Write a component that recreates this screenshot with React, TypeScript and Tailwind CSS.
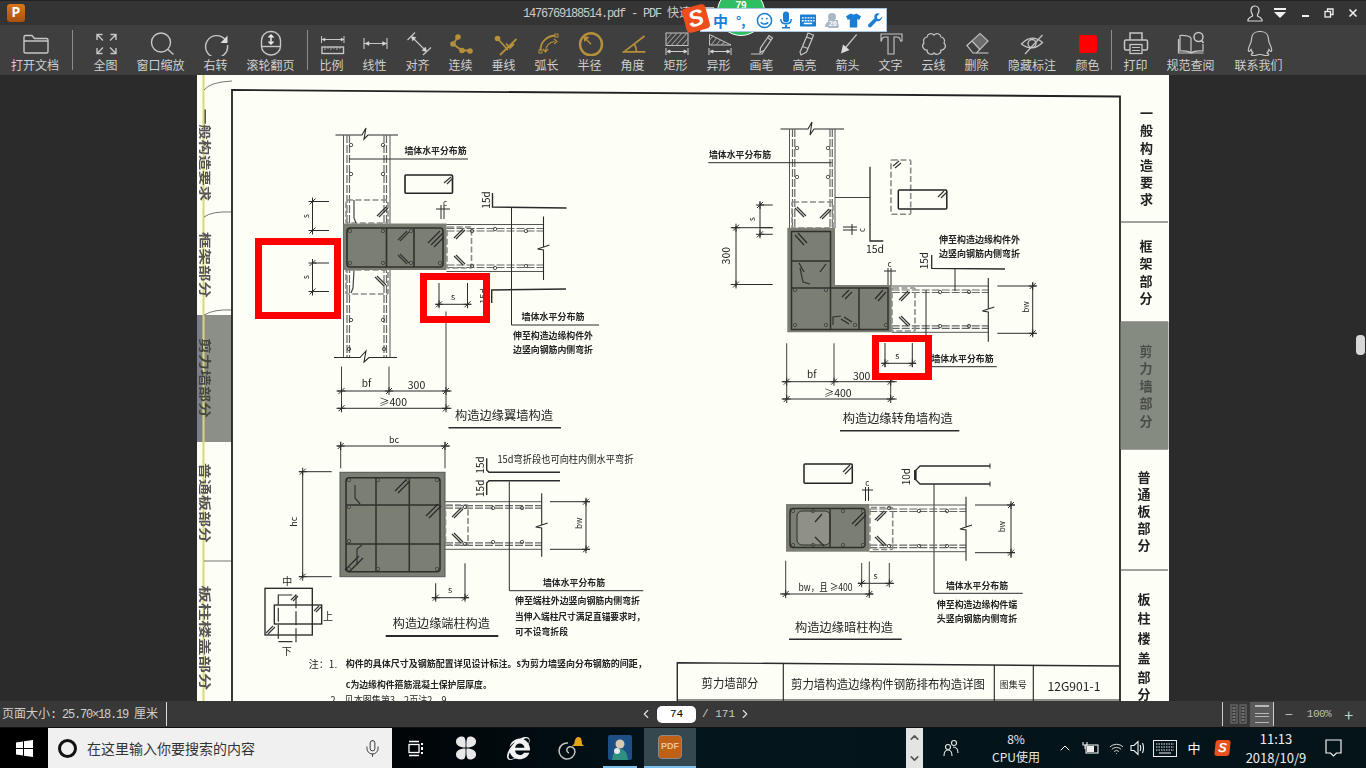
import { ReactNode } from "react";
import { Mic, Wifi, ChevronUp, ChevronDown, ChevronLeft, ChevronRight } from "lucide-react";
import { FaInternetExplorer } from "react-icons/fa";

const Ico = ({ children }: { children: ReactNode }) => (
  <svg viewBox="0 0 36 26" width="36" height="26" fill="none" stroke="#c6c6c6" strokeWidth="1.4">
    {children}
  </svg>
);
const GOLD = "#b5903a";

const DimStrip = () => (
  <g strokeWidth="1" stroke="#d0d0d0">
    <path d="M8 18v7M30 18v7M9 21.500h20" />
    <path d="M9 21.500l3-1.500v3zM29 21.500l-3-1.500v3z" fill="#d0d0d0" />
  </g>
);

const tools: { label: string; w: string; icon: ReactNode; sep?: string }[] = [
  {
    label: "打开文档",
    w: "w-[70px]",
    sep: "ml-[2px] mr-[5px]",
    icon: <Ico><path d="M7 22V7q0-1.500 1.500-1.500h6.500l2.500 3h12q1.500 0 1.500 1.500v11.500q0 1.500-1.500 1.500h-21q-1.500 0-1.500-1.500zM7 11h24" /></Ico>,
  },
  {
    label: "全图",
    w: "w-[55px]",
    icon: <Ico><path d="M9 10V4.500h5.500M9 4.500l6 6M28 10V4.500h-5.500M28 4.500l-6 6M9 18v5.500h5.500M9 23.500l6-6M28 18v5.500h-5.500M28 23.500l-6-6" /></Ico>,
  },
  {
    label: "窗口缩放",
    w: "w-[55px]",
    icon: <Ico><circle cx="18" cy="12.500" r="9.500" /><path d="M25 19.500l5.500 5" /></Ico>,
  },
  {
    label: "右转",
    w: "w-[55px]",
    icon: <Ico><path d="M27 9.500A11 11 0 1 0 29.500 15" /><path d="M29.500 5.500v7.500h-7z" fill="#dcdcdc" stroke="none" /></Ico>,
  },
  {
    label: "滚轮翻页",
    w: "w-[55px]",
    sep: "ml-[9px] mr-[2px]",
    icon: <Ico><rect x="8.500" y="1.500" width="19" height="23.500" rx="9" /><path d="M9 16.500h18" /><path d="M18 5.500v8M15.500 7.500l2.500-2.500 2.500 2.500M15.500 11.500l2.500 2.500 2.500-2.500" stroke="#ececec" strokeWidth="1.500" /></Ico>,
  },
  {
    label: "比例",
    w: "w-[43px]",
    icon: <Ico><path d="M7.500 6v7M30 6v7M8 9.500h22" strokeWidth="1" /><path d="M8 9.500l3-1.500v3zM30 9.500l-3-1.500v3z" fill="#ddd" strokeWidth="0.500" /><rect x="8" y="17" width="21.500" height="6.500" /><path d="M11 17v3M14 17v2M17 17v3M20 17v2M23 17v3M26 17v2" strokeWidth="0.800" /></Ico>,
  },
  {
    label: "线性",
    w: "w-[43px]",
    icon: <Ico><path d="M7 8v11M30 8v11M7.500 13.500h22" strokeWidth="1.100" /><path d="M8 13.500l4-2v4zM29.500 13.500l-4-2v4z" fill="#ddd" strokeWidth="0.500" /></Ico>,
  },
  {
    label: "对齐",
    w: "w-[43px]",
    icon: <Ico><path d="M7.500 10L15 2.500M23 25l8-7.500M11.500 6.500l15 15" strokeWidth="1.200" /><path d="M11.500 6.500l4.500 1-3.500 3.500zM26.500 21.500l-4.500-1 3.500-3.500z" fill="#ddd" strokeWidth="0.500" /></Ico>,
  },
  {
    label: "连续",
    w: "w-[43px]",
    icon: <Ico><path d="M15 7l-5 7 9 6.500h8" stroke={GOLD} strokeWidth="1.800" /><g fill={GOLD} stroke="none"><circle cx="15" cy="7" r="2.800" /><circle cx="10" cy="14" r="2.800" /><circle cx="19" cy="20.500" r="2.800" /><circle cx="27" cy="21" r="2.800" /></g></Ico>,
  },
  {
    label: "垂线",
    w: "w-[43px]",
    icon: <Ico><path d="M11.500 8.500L22 20M30.500 9L14 25M20 13.500l4 4.500 4-4" stroke={GOLD} strokeWidth="1.800" /><circle cx="11.500" cy="8.500" r="2.800" fill={GOLD} stroke="none" /></Ico>,
  },
  {
    label: "弧长",
    w: "w-[43px]",
    icon: <Ico><path d="M11.500 20C11.500 12 18 6 26 5.500" stroke={GOLD} strokeWidth="1.800" /><path d="M16.500 21c0-5 4-9 9-9.500M25 9l3 2.500-3 2.500M14 19l2.500 3 2.500-3" stroke={GOLD} strokeWidth="1.200" /><rect x="10" y="20" width="3" height="3" stroke={GOLD} strokeWidth="1" /><rect x="26" y="4" width="3" height="3" stroke={GOLD} strokeWidth="1" /></Ico>,
  },
  {
    label: "半径",
    w: "w-[43px]",
    icon: <Ico><circle cx="19" cy="14.300" r="11" stroke={GOLD} strokeWidth="2.400" /><path d="M19 14.300L12.500 7.500" stroke={GOLD} strokeWidth="1.400" /><path d="M11 6l6.500 1-5 5z" fill={GOLD} stroke="none" /></Ico>,
  },
  {
    label: "角度",
    w: "w-[43px]",
    icon: <Ico><path d="M7.500 21.800h23M9 21.800L29.500 6M19.500 14.500q2 3 2 7" stroke={GOLD} strokeWidth="1.700" /></Ico>,
  },
  {
    label: "矩形",
    w: "w-[43px]",
    icon: <Ico><rect x="8" y="3" width="22" height="12.500" strokeWidth="1" /><path d="M8 10l6-7M8 15.500L19 3M13 15.500L24 3M18 15.500L29 3M24 15.500l6-7" strokeWidth="1.100" stroke="#9c9c9c" /><DimStrip /></Ico>,
  },
  {
    label: "异形",
    w: "w-[43px]",
    icon: <Ico><path d="M8.500 4.500L30 15H8.500z" strokeWidth="1" /><path d="M8.500 10l4-4.500M10 15l6-7.500M15 15l5-5.500M20 15l4-3" strokeWidth="1.100" stroke="#9c9c9c" /><DimStrip /></Ico>,
  },
  {
    label: "画笔",
    w: "w-[43px]",
    icon: <Ico><path d="M20 20.500l-4 2 .5-4.500L25 5.500l3.500 2.500zM23.500 7.500L27 10" strokeWidth="1.200" /><path d="M7 24h11l2-3" strokeWidth="1.100" /></Ico>,
  },
  {
    label: "高亮",
    w: "w-[43px]",
    icon: <Ico><path d="M21 3l5.500 2-1.500 4-5.500-2zM19.500 7l5.500 2-4 9.500-5.500-2zM15.500 16.500l5.500 2-1.500 3.500-5.500 3-1-3z" strokeWidth="1.200" /></Ico>,
  },
  {
    label: "箭头",
    w: "w-[43px]",
    icon: <Ico><path d="M26.700 4.300L14 19.500" strokeWidth="1.300" /><path d="M11 23.500l2-9 6.500 5.500z" fill="#dcdcdc" stroke="none" /></Ico>,
  },
  {
    label: "文字",
    w: "w-[43px]",
    icon: <Ico><path d="M8 4h21v7h-1.500q-.5-4-3.500-4h-3v17h-6V7h-3q-3 0-3.500 4H8z" strokeWidth="1.100" /></Ico>,
  },
  {
    label: "云线",
    w: "w-[43px]",
    icon: <Ico><path d="M11 7a4 4 0 0 1 7-2a4 4 0 0 1 7 2a4 4 0 0 1 3 6a4 4 0 0 1-3 7a4 4 0 0 1-7 3a4 4 0 0 1-7-3a4 4 0 0 1-3-7a4 4 0 0 1 3-6z" strokeWidth="1.200" /></Ico>,
  },
  {
    label: "删除",
    w: "w-[43px]",
    icon: <Ico><path d="M8 15.500L21 3.500l8 7.500-11.500 12h-3.500z" strokeWidth="1.200" /><path d="M13 11l8 8.500" strokeWidth="1.200" /><path d="M21 3.500l8 7.500-8 8-8-8.500z" fill="#9a9a9a" stroke="none" opacity="0.500" /><path d="M17.500 23h12" strokeWidth="1.100" /></Ico>,
  },
  {
    label: "隐藏标注",
    w: "w-[68px]",
    icon: <Ico><path d="M7.500 14q10-11 21-1.500-10 10-21 1.500z" strokeWidth="1.300" /><circle cx="18" cy="13.500" r="4" strokeWidth="1.300" /><path d="M11 24L28.500 5" strokeWidth="1.200" /></Ico>,
  },
  {
    label: "颜色",
    w: "w-[43px]",
    sep: "ml-[2px] mr-[2px]",
    icon: <Ico><rect x="9" y="5" width="18" height="18" rx="2" fill="#ff0000" stroke="none" /></Ico>,
  },
  {
    label: "打印",
    w: "w-[43px]",
    icon: <Ico><path d="M12 10V3h12v7M12 20H8q-1.500 0-1.500-1.500v-7q0-1.500 1.500-1.500h20q1.500 0 1.500 1.500v7q0 1.500-1.500 1.500h-4" strokeWidth="1.500" /><rect x="12" y="14.500" width="12" height="9" strokeWidth="1.300" /><path d="M14 17.500h8M14 20.500h8" strokeWidth="1" /></Ico>,
  },
  {
    label: "规范查阅",
    w: "w-[67px]",
    icon: <Ico><path d="M18 8q-3-3-11-2.500V21q8-.5 11 2 3-2.500 12-2v-7M18 8v15M5.500 9v14h12q.5 1 1 0h12" strokeWidth="1.200" /><circle cx="25.500" cy="7" r="4.500" strokeWidth="1.500" /><path d="M28.500 10.500l2 2.500" strokeWidth="1.800" /></Ico>,
  },
  {
    label: "联系我们",
    w: "w-[69px]",
    icon: <Ico><path d="M18 1.500c-5 0-7.500 3.500-7.500 8 0 2-.5 3-1.500 5-1.500 3-2 5-1.500 6.500.5 1 1.500 0 2.500-1.500.4 1.500 1 2.500 2 3.500-1.500.7-2 1.500-1.500 2 1 1 5 .5 7.500-.5h2c2.500 1 6.500 1.500 7.500.5.500-.5 0-1.300-1.500-2 1-1 1.600-2 2-3.500 1 1.500 2 2.500 2.500 1.500.5-1.500 0-3.500-1.500-6.500-1-2-1.500-3-1.500-5 0-4.500-2.500-8-7.500-8z" strokeWidth="1.200" /></Ico>,
  },
];

// scanned drawing helpers, coordinates are page pixels
const INK = "#2b2b2b";
const Pl = ({ p, w = 1, c = INK, d }: { p: string; w?: number; c?: string; d?: string }) => (
  <polyline points={p} fill="none" stroke={c} strokeWidth={w} strokeDasharray={d} />
);
const T = ({ x, y, s = 9, w, b, r, c = "#222", children }: { x: number; y: number; s?: number; w?: number; b?: boolean; r?: number; c?: string; children: ReactNode }) => (
  <text
    x={x}
    y={y}
    fontSize={s}
    fontWeight={b ? 700 : 400}
    fill={c}
    textAnchor="middle"
    dominantBaseline="central"
    textLength={w}
    lengthAdjust={w ? "spacingAndGlyphs" : undefined}
    transform={r ? `rotate(${r} ${x} ${y})` : undefined}>
    {children}
  </text>
);
const Tick = ({ x, y }: { x: number; y: number }) => (
  <path d={`M${x - 3} ${y + 3}L${x + 3} ${y - 3}M${x - 4} ${y}h8M${x} ${y - 4}v8`} stroke={INK} strokeWidth="1" fill="none" />
);
const Hatch = ({ x, y, flip }: { x: number; y: number; flip?: boolean }) => (
  <path
    d={flip ? `M${x - 5} ${y - 5}l9 9M${x - 3} ${y - 6}l9 9` : `M${x - 5} ${y + 5}l9 -9M${x - 3} ${y + 6}l9 -9`}
    stroke="#333"
    strokeWidth="1.200"
    fill="none"
  />
);
const Dots = ({ pts }: { pts: number[][] }) => (
  <g fill="none" stroke="#444" strokeWidth="0.900">
    {pts.map(([x, y]) => (
      <circle key={`${x}-${y}`} cx={x} cy={y} r="1.700" />
    ))}
  </g>
);
const HWall = ({ x1, x2, t, b }: { x1: number; x2: number; t: number; b: number }) => (
  <g>
    <Pl p={`${x1},${t} ${x2},${t}`} c="#555" />
    <Pl p={`${x1},${t + 4} ${x2},${t + 4}`} c="#666" w={1.200} d="8 2" />
    <Pl p={`${x1},${t + 6.500} ${x2},${t + 6.500}`} c="#666" w={1.200} d="8 2" />
    <Pl p={`${x1},${b - 6.500} ${x2},${b - 6.500}`} c="#666" w={1.200} d="8 2" />
    <Pl p={`${x1},${b - 4} ${x2},${b - 4}`} c="#666" w={1.200} d="8 2" />
    <Pl p={`${x1},${b} ${x2},${b}`} c="#555" />
  </g>
);
const Brk = ({ x, y1, y2, my }: { x: number; y1: number; y2: number; my: number }) => (
  <Pl p={`${x},${y1} ${x},${my - 1} ${x + 6},${my - 3} ${x - 6},${my + 1} ${x},${my + 2} ${x},${y2}`} w={1.100} />
);
const Stir = ({ x, y, w, h }: { x: number; y: number; w: number; h: number }) => (
  <rect x={x} y={y} width={w} height={h} rx="1" fill="none" stroke="#8a8a8a" strokeWidth="1.600" strokeDasharray="6 2.500" />
);

const Vert = ({ x, ys, chars, c, s = 13 }: { x: number; ys: number[]; chars: string; c?: string; s?: number }) => (
  <g>
    {chars.split("").map((ch, i) => (
      <T key={i} x={x} y={ys[i]} s={s} c={c} b>
        {ch}
      </T>
    ))}
  </g>
);

const GRAY = "#7b7e72";

const Drawing = () => (
  <svg viewBox="197 75 972 626" width="972" height="626" className="blur-[0.3px] font-['Noto_Sans_CJK_SC','Liberation_Sans',sans-serif]">
    <rect x="197" y="75" width="972" height="626" fill="#fdfef6" />
    {/* left binding strip */}
    <rect x="197" y="315" width="35" height="127" fill="#8b8f87" />
    <rect x="197" y="315" width="6" height="127" fill="#7d7f90" />
    <rect x="202.500" y="75" width="2" height="626" fill="#dcd870" />
    <path d="M204 90q6-8 28-9M204 217q8-6 28-5M204 315q10-6 28-5M204 561h28" stroke="#555" strokeWidth="0.800" fill="none" />
    <T x={205.500} y={155} s={12} r={90} w={92} c="#555" b>一般构造要求</T>
    <T x={205.500} y={265} s={12} r={90} w={66} c="#555" b>框架部分</T>
    <T x={205.500} y={378} s={12} r={90} w={80} c="#45483f" b>剪力墙部分</T>
    <T x={205.500} y={503} s={12} r={90} w={80} c="#555" b>普通板部分</T>
    <T x={205.500} y={638} s={12} r={90} w={105} c="#555" b>板柱楼盖部分</T>

    {/* sheet frame */}
    <path d="M232 701V90L1120 96.500V701" stroke="#222" strokeWidth="1.800" fill="none" />
    <path d="M1120 222h48M1120 322h48M1120 449h48M1120 570h48" stroke="#444" strokeWidth="1" />
    <rect x="1120.500" y="322" width="48" height="127" fill="#868b82" />
    <Vert x={1146.500} chars="一般构造要求" ys={[112, 129.500, 147.500, 164.500, 181.500, 198.500]} />
    <Vert x={1146} chars="框架部分" ys={[245.500, 262.500, 280, 297.500]} />
    <Vert x={1146} chars="剪力墙部分" ys={[350, 367.500, 385, 402.500, 420]} c="#4b4e48" />
    <Vert x={1144} chars="普通板部分" ys={[476, 493, 510, 527.500, 544.500]} />
    <Vert x={1144} chars="板柱楼盖部分" ys={[598, 617.500, 637.500, 657, 676, 693]} />

    {/* wing wall */}
    <Pl p="335.500,135 362,135 366,128 364,139 368,135 398,135" w={1.100} />
    <Pl p="334,357.500 360,357.500 366,351 364,362 369,357.500 397,357.500" w={1.100} />
    {[343.500, 390].map((x) => (
      <Pl key={x} p={`${x},135 ${x},357`} c="#555" />
    ))}
    {[347, 349.500, 384, 386.500].map((x) => (
      <Pl key={x} p={`${x},135 ${x},357`} c="#666" w={1.200} d="8 2" />
    ))}
    <Dots pts={[[351, 145], [383, 145], [351, 174], [383, 174], [351, 320], [383, 320], [349, 349], [384, 349]]} />
    <Stir x={346} y={200} w={42} h={23} />
    <Stir x={346} y={270} w={42} h={24} />
    <Hatch x={382} y={211} />
    <Hatch x={380} y={282} flip />
    <Pl p="354,200 354,218 356,223" w={1.200} c="#444" />
    <Pl p="354,270 353,288 351,293" w={1.200} c="#444" />
    <rect x="343.500" y="223.500" width="103" height="46.500" fill={GRAY} />
    <rect x="347" y="228" width="96" height="39" rx="3" fill="none" stroke="#2f302b" strokeWidth="1.600" />
    <path d="M386.500 228v39M414 228v39" stroke="#2f302b" strokeWidth="1.600" />
    <Hatch x={403} y={235} />
    <Hatch x={403} y={260} flip />
    <path d="M428 243l12-12M431 245l12-12M434 247l10-10" stroke="#2a2a2a" strokeWidth="1.200" />
    <Dots pts={[[350, 231], [383, 231], [411, 231], [350, 263], [383, 263], [411, 263], [440, 263]]} />
    <HWall x1={446.500} x2={543} t={224.500} b={271.500} />
    <Stir x={447} y={227} w={24.500} h={41} />
    <Hatch x={459} y={233} />
    <Hatch x={459} y={261} flip />
    <Dots pts={[[472, 231], [495, 229], [526, 231], [472, 266], [495, 268], [526, 266]]} />
    <Brk x={543.500} y1={216.500} y2={280} my={248} />
    <rect x="405" y="175" width="47.500" height="18.300" rx="1" fill="none" stroke="#222" strokeWidth="1.600" />
    <path d="M444 183l7-6M447 184l6-6" stroke="#333" strokeWidth="1.200" />
    <T x={435.500} y={150} w={62} b>墙体水平分布筋</T>
    <Pl p="349,159 468,159" />
    <T x={445} y={202} s={8}>c</T>
    <path d="M441 205v14M444 205v14M436 209h14" stroke={INK} strokeWidth="1" fill="none" />
    <Pl p="492.500,193 492.500,207 566.500,208" w={1.400} />
    <T x={485} y={200} r={-90} s={10}>15d</T>
    <Pl p="511.500,208 511.500,325 599,325" />
    <Pl p="312.500,199 312.500,232" />
    <Pl p="312.500,201.500 329,201.500" />
    <Pl p="312.500,230.500 329,230.500" />
    <Tick x={312.500} y={201.500} />
    <Tick x={312.500} y={230.500} />
    <T x={305} y={216} r={-90} s={8}>s</T>
    <Pl p="312.500,259 312.500,294" />
    <Pl p="312.500,263 329,263" />
    <Pl p="312.500,291.500 329,291.500" />
    <Tick x={312.500} y={263} />
    <Tick x={312.500} y={291.500} />
    <T x={305} y={277} r={-90} s={8}>s</T>
    <Pl p="439,283 439,307" />
    <Pl p="467.500,283 467.500,307" />
    <Pl p="436,304.300 471,304.300" />
    <Tick x={439} y={304.300} />
    <Tick x={467.500} y={304.300} />
    <T x={453} y={296.500} s={9}>s</T>
    <Pl p="491.700,303 491.700,290 566,289" w={1.400} />
    <T x={553} y={316.500} w={63} b>墙体水平分布筋</T>
    <T x={553} y={335.500} w={80} b>伸至构造边缘构件外</T>
    <T x={553} y={349} w={80} b>边竖向钢筋内侧弯折</T>
    <path d="M341.500 366.500V410M389 366.500V392M446 311.500V410" stroke={INK} strokeWidth="0.900" />
    <Pl p="336.500,391 451.500,391" />
    <Pl p="336.500,408.300 451.500,408.300" />
    <Tick x={341.500} y={391} />
    <Tick x={389} y={391} />
    <Tick x={446} y={391} />
    <Tick x={341.500} y={408.300} />
    <Tick x={446} y={408.300} />
    <T x={366.500} y={382.500} s={10}>bf</T>
    <T x={416.500} y={384} s={10.500}>300</T>
    <T x={393} y={401.500} s={10.500}>≥400</T>
    <T x={504} y={415} s={12.200} w={98}>构造边缘翼墙构造</T>
    <Pl p="448.500,427.700 561,427.700" w={1.600} />
    <T x={483} y={296} r={-90} s={9}>15d</T>

    {/* corner wall */}
    <Pl p="780.500,129 808,129 812,122 810,135 814,129 844,129" w={1.100} />
    {[789.500, 835].map((x) => (
      <Pl key={x} p={`${x},129 ${x},228`} c="#555" />
    ))}
    {[792.500, 794.800, 830, 832.300].map((x) => (
      <Pl key={x} p={`${x},129 ${x},228`} c="#666" w={1.200} d="8 2" />
    ))}
    <Dots pts={[[797, 148], [828, 148], [797, 177], [828, 177]]} />
    <Stir x={792} y={202} w={41} h={26} />
    <Hatch x={800} y={213} flip />
    <Hatch x={825} y={213} />
    <polygon points="787.300,227.700 835,227.700 835,285 891.700,285 891.700,332.300 787.300,332.300" fill={GRAY} />
    <path d="M791.500 231.500h39V288h57.500v41.500H791.500zM791.500 261h39M791.500 288h39M830.500 288v41.500M859 288v41.500" fill="none" stroke="#2f302b" strokeWidth="1.500" />
    <path d="M795 235l9 10M798 233l9 10M799 263l5 9M826 264l-6 8M842 297l7-7M845 299l7-7M875 299l8-9M878 301l8-9M841 319l8 5M844 317l8 5" stroke="#2a2a2a" strokeWidth="1.200" />
    <Pl p="800,268 803,282 810,284" w={1.200} c="#333" />
    <Pl p="833,325 833,317 841,316" w={1.200} c="#333" />
    <Dots pts={[[795, 290], [826, 290], [795, 325], [826, 325], [855, 325], [886, 325]]} />
    <HWall x1={891.700} x2={988} t={286} b={332.300} />
    <Stir x={892} y={288} w={23} h={43} />
    <Hatch x={904} y={295} />
    <Hatch x={904} y={322} flip />
    <Dots pts={[[940, 292], [969, 292], [940, 326], [969, 326]]} />
    <Brk x={988.300} y1={278} y2={341.700} my={310} />
    <T x={740} y={154} w={62} b>墙体水平分布筋</T>
    <Pl p="708.300,162.700 831.700,162.700" />
    <Pl p="760,202 760,237" />
    <Pl p="760,205 772.700,205" />
    <Pl p="760,227.700 772.700,227.700" />
    <Pl p="760,234.300 772.700,234.300" />
    <Tick x={760} y={205} />
    <Tick x={760} y={234.300} />
    <T x={751} y={219} r={-90} s={8}>s</T>
    <Pl p="736,226 736,287" />
    <Pl p="730.700,227.700 772.700,227.700" />
    <Pl p="730.700,284.500 772.700,284.500" />
    <Tick x={736} y={227.700} />
    <Tick x={736} y={284.500} />
    <T x={726} y={255.700} r={-90} s={10.500}>300</T>
    <Pl p="870,166.700 870,241 883.300,241" w={1.300} />
    <Pl p="835,197.500 870,197.500" w={0.900} />
    <T x={875} y={248.500} s={10.500}>15d</T>
    <path d="M843 230h14M843 227h14M852 224v11" stroke={INK} fill="none" />
    <T x={861} y={230} s={8} r={-90}>c</T>
    <Stir x={891} y={160} w={19.700} h={54.300} />
    <rect x="898.300" y="190" width="48.500" height="19" rx="1" fill="none" stroke="#222" strokeWidth="1.500" />
    <path d="M893 166l6-5M895 168l6-5M938 197l6-6M941 198l6-6" stroke="#333" strokeWidth="1.200" />
    <T x={889.500} y={263.500} s={8}>c</T>
    <path d="M888 268v17M891 268v17M884 271h12" stroke={INK} fill="none" />
    <T x={923.300} y={260.700} r={-90} s={10}>15d</T>
    <Pl p="931.700,255 931.700,268.300 1005,269" w={1.300} />
    <Pl p="955,269 955,291" />
    <T x={979.500} y={239.300} w={81} b>伸至构造边缘构件外</T>
    <T x={979.500} y={253.300} w={81} b>边竖向钢筋内侧弯折</T>
    <Pl p="1032.700,283 1032.700,336" />
    <Pl p="997.300,286 1036.700,286" />
    <Pl p="997.300,333.300 1036.700,333.300" />
    <Tick x={1032.700} y={286} />
    <Tick x={1032.700} y={333.300} />
    <T x={1025} y={307} r={-90} s={8}>bw</T>
    <Pl p="926,290 926,335" />
    <path d="M786.700 343.300V400M834 343.300V382M890.700 376V400" stroke={INK} strokeWidth="0.900" />
    <Pl p="781.700,381.700 896.700,381.700" />
    <Pl p="781.700,399 896.700,399" />
    <Tick x={786.700} y={381.700} />
    <Tick x={834} y={381.700} />
    <Tick x={890.700} y={381.700} />
    <Tick x={786.700} y={399} />
    <Tick x={890.700} y={399} />
    <T x={811.700} y={373.300} s={10}>bf</T>
    <T x={861.700} y={375} s={10.500}>300</T>
    <T x={837.700} y={392.300} s={10.500}>≥400</T>
    <T x={962.500} y={358.300} w={62} b>墙体水平分布筋</T>
    <Pl p="926,366.700 996.700,366.700" />
    <Pl p="885,343 885,367" />
    <Pl p="912.300,343 912.300,367" />
    <Pl p="882,363.300 916,363.300" />
    <Tick x={885} y={363.300} />
    <Tick x={912.300} y={363.300} />
    <T x={897.300} y={355.700} s={9}>s</T>
    <T x={897.700} y={417.700} s={12.200} w={110}>构造边缘转角墙构造</T>
    <Pl p="840,430.700 959.300,430.700" w={1.600} />

    {/* end column */}
    <Pl p="336.700,446 450,446" />
    <path d="M340.700 441.700V468.300M445 441.700V468.300" stroke={INK} strokeWidth="0.900" />
    <Tick x={340.700} y={446} />
    <Tick x={445} y={446} />
    <T x={394} y={439.300} s={9}>bc</T>
    <Pl p="302.700,471 302.700,578" />
    <Pl p="299,471.700 331.700,471.700" />
    <Pl p="299,576.700 331.700,576.700" />
    <Tick x={302.700} y={471.700} />
    <Tick x={302.700} y={576.700} />
    <T x={293.300} y={521.700} r={-90} s={9}>hc</T>
    <rect x="340" y="472.300" width="105" height="104.400" fill={GRAY} stroke="#555" />
    <rect x="346" y="477.700" width="94" height="94" rx="3" fill="none" stroke="#2f302b" strokeWidth="1.600" />
    <path d="M376 477.700v94M409.300 477.700v94M346 505h94M346 544h94" stroke="#2f302b" strokeWidth="1.500" />
    <path d="M395 491l12-12M398 493l12-12M426 516l12-12M429 518l12-12M345 570l14-14M349 572l14-14" stroke="#262626" strokeWidth="1.200" />
    <Pl p="355,485 355,498 360,504" w={1.200} c="#333" />
    <Pl p="357,565 357,549 362,545" w={1.200} c="#333" />
    <Dots pts={[[349, 480], [378, 480], [408, 480], [437, 480], [349, 507], [349, 541], [349, 569], [378, 569], [437, 569]]} />
    <HWall x1={445} x2={541.500} t={501.700} b={549.300} />
    <Stir x={445.500} y={505} w={22.500} h={40} />
    <Hatch x={457} y={512} />
    <Hatch x={457} y={539} flip />
    <Dots pts={[[465, 507], [493, 508], [522, 508], [465, 544], [493, 542], [522, 542]]} />
    <Brk x={541.700} y1={493.300} y2={556.700} my={526} />
    <Pl p="486.700,458.300 486.700,470 489,472.300 560,472.300" w={1.400} />
    <Pl p="486.700,495 486.700,483 489,480.700 560,480.700" w={1.400} />
    <T x={479.300} y={465} r={-90} s={10}>15d</T>
    <T x={479.300} y={488.300} r={-90} s={10}>15d</T>
    <T x={565.500} y={458.300} w={136} s={10}>15d弯折段也可向柱内侧水平弯折</T>
    <Pl p="509.300,481.700 509.300,590.700 643.300,590.700" />
    <T x={574} y={582.300} w={62} b>墙体水平分布筋</T>
    <T x={577.500} y={600} w={125} b>伸至端柱外边竖向钢筋内侧弯折</T>
    <T x={580} y={616} w={130} b>当伸入端柱尺寸满足直锚要求时，</T>
    <T x={541.500} y={631} w={53} b>可不设弯折段</T>
    <Pl p="586,499 586,551" />
    <Pl p="550,501.700 590,501.700" />
    <Pl p="550,549.300 590,549.300" />
    <Tick x={586} y={501.700} />
    <Tick x={586} y={549.300} />
    <T x={578.300} y={523.300} r={-90} s={8}>bw</T>
    <Pl p="435.700,583.300 435.700,600" />
    <Pl p="465,563.300 465,600" />
    <Pl p="432,597.700 469,597.700" />
    <Tick x={435.700} y={597.700} />
    <Tick x={465} y={597.700} />
    <T x={450} y={589.300} s={9}>s</T>
    <T x={441.300} y={623.300} s={12.200} w={97}>构造边缘端柱构造</T>
    <Pl p="385.700,636 498.300,636" w={1.800} />
    <rect x="265" y="588.300" width="47.300" height="46.700" fill="none" stroke="#222" strokeWidth="1.300" />
    <rect x="274.300" y="605" width="47.400" height="19" fill="none" stroke="#222" strokeWidth="1.300" />
    <rect x="278.300" y="595" width="17.700" height="46.700" fill="none" stroke="#333" strokeWidth="1.200" strokeDasharray="14 3" />
    <path d="M291 600l5-5M293 601l5-5M314 611l5-5M316 612l5-5M266 633l7-7M268 634l7-7" stroke="#333" strokeWidth="1.100" />
    <T x={287.300} y={580.700} s={10}>中</T>
    <T x={328} y={615} s={10}>上</T>
    <T x={286.700} y={650} s={10}>下</T>
    <T x={323} y={663.300} s={10}>注：1.</T>
    <T x={496.300} y={663.300} w={301} b>构件的具体尺寸及钢筋配置详见设计标注。s为剪力墙竖向分布钢筋的间距，</T>
    <T x={418.800} y={684} w={146} b>c为边缘构件箍筋混凝土保护层厚度。</T>
    <T x={393} y={699} s={10} w={125}>2．见本图集第3、2页注2、9。</T>

    {/* hidden column */}
    <rect x="804" y="464" width="48.300" height="19.300" rx="1" fill="none" stroke="#222" strokeWidth="1.500" />
    <path d="M843 472l7-7M845 474l7-7" stroke="#333" strokeWidth="1.200" />
    <Pl p="990,466 920,466 916,470 916,480 920,484 990,484" w={1.300} />
    <path d="M990 463.500v5M990 481.500v5" stroke={INK} />
    <Pl p="915,470 915,480" w={2} />
    <T x={906} y={476.700} r={-90} s={10}>10d</T>
    <Pl p="934,484 934,593.300 1022.700,593.300" />
    <T x={867.300} y={482.700} s={8}>c</T>
    <path d="M865.500 487v14M868.500 487v14M862 490h11" stroke={INK} fill="none" />
    <rect x="786" y="504" width="83.300" height="47.700" fill={GRAY} />
    <rect x="790" y="508.500" width="75" height="39" rx="3" fill="none" stroke="#2f302b" strokeWidth="1.500" />
    <rect x="797" y="511" width="33" height="34" rx="5" fill="#8f9186" stroke="#2f302b" strokeWidth="1" />
    <path d="M830 508.500v39" stroke="#2f302b" strokeWidth="1.500" />
    <path d="M815 522l7-8M852 524l11-11M855 526l11-11M815 537l9 9" stroke="#2a2a2a" strokeWidth="1.300" />
    <Dots pts={[[793, 511], [813, 511], [843, 511], [863, 511], [793, 545], [813, 545], [843, 545], [863, 545]]} />
    <HWall x1={869.300} x2={966} t={505} b={551.700} />
    <Stir x={870} y={507.500} w={22.700} h={42} />
    <Hatch x={880} y={515} />
    <Hatch x={880} y={542} flip />
    <Dots pts={[[889, 508], [919, 511], [947, 511], [889, 546], [919, 546], [947, 546]]} />
    <Brk x={966} y1={496.700} y2={560.700} my={528} />
    <Pl p="1011,503 1011,558" />
    <Pl p="975,505 1015,505" />
    <Pl p="975,552.700 1015,552.700" />
    <Tick x={1011} y={505} />
    <Tick x={1011} y={552.700} />
    <T x={1001.700} y={526.700} r={-90} s={8}>bw</T>
    <path d="M785.700 560.700V596M869.300 561.500V596M861.700 563V584M889.300 563V584" stroke={INK} strokeWidth="0.900" />
    <Pl p="858,583.300 894,583.300" />
    <Pl p="780,594 873.300,594" />
    <Tick x={861.700} y={583.300} />
    <Tick x={889.300} y={583.300} />
    <Tick x={785.700} y={594} />
    <Tick x={869.300} y={594} />
    <T x={875.700} y={575} s={9}>s</T>
    <T x={825.500} y={586.700} s={10} w={54}>bw，且 ≥400</T>
    <T x={977} y={585} w={62} b>墙体水平分布筋</T>
    <T x={977} y={604.300} w={80.500} b>伸至构造边缘构件端</T>
    <T x={977} y={618.300} w={80.500} b>头竖向钢筋内侧弯折</T>
    <T x={844} y={626.700} s={12.200} w={98}>构造边缘暗柱构造</T>
    <Pl p="789,639.300 901.700,639.300" w={1.600} />

    {/* title block */}
    <Pl p="677.300,701 677.300,662.700 1120,666" w={1.400} />
    <path d="M783.300 663.500V701M994.300 665V701M1033.300 665.500V701M677.300 700h443" stroke="#222" strokeWidth="1.100" fill="none" />
    <T x={730} y={682.300} s={12} w={57}>剪力墙部分</T>
    <T x={888} y={683} s={12} w={194}>剪力墙构造边缘构件钢筋排布构造详图</T>
    <T x={1013.300} y={684} s={9} w={27}>图集号</T>
    <T x={1074} y={685} s={12} w={53}>12G901-1</T>

    {/* red marks */}
    <g fill="none" stroke="#ff0000" strokeWidth="7">
      <rect x="258.500" y="241.500" width="79" height="74" />
      <rect x="423.500" y="276.500" width="63" height="43" />
      <rect x="875.500" y="338.500" width="53" height="38" />
    </g>
  </svg>
);

export default function App() {
  return (
    <div className="relative w-[1366px] h-[768px] overflow-hidden bg-[#2b2b2b] font-['Noto_Sans_CJK_SC','Liberation_Sans',sans-serif] text-[#d2d2d2]">
      {/* title bar */}
      <div className="h-[25px] bg-[#343434] border-t border-[#222] flex items-center">
        <div className="ml-[7px] w-[18px] h-[18px] rounded-[3px] bg-gradient-to-b from-[#d9761a] to-[#a9500c] flex items-center justify-center text-white text-[14px] font-bold font-['Liberation_Mono',monospace]">
          P
        </div>
        <span className="ml-[498px] text-[12px] tracking-[-1.2px] text-[#cccccc] font-['Liberation_Mono',monospace] whitespace-pre">
          1476769188514.pdf - PDF <span className="tracking-normal font-['Noto_Sans_CJK_SC',sans-serif]">快速看图</span>
        </span>
        <div className="ml-auto flex items-center">
          <svg viewBox="0 0 18 18" width="18" height="18" fill="none" stroke="#d8d8d8" strokeWidth="1.200">
            <path d="M9 2c-2.500 0-4 2-4 4.500 0 1.500.7 3 1.500 4v1.500Q3 13.500 2 15.500V17h14v-1.500q-1-2-4.500-3.500v-1.500c.8-1 1.500-2.500 1.500-4C13 4 11.500 2 9 2z" />
          </svg>
          <svg viewBox="0 0 14 14" width="14" height="14" className="ml-[9px]" fill="#f0f0f0">
            <path d="M1 2h12v2H1zM1 6h12l-6 6z" />
          </svg>
          <div className="ml-[15px] w-[7px] h-[2px] bg-[#eee] mt-[6px]" />
          <svg viewBox="0 0 10 10" width="10" height="10" className="ml-[15px]" fill="none" stroke="#eee" strokeWidth="1.300">
            <rect x="1" y="3.500" width="5.500" height="5.500" />
            <path d="M3.500 3.500V1H9v5.500H6.500" />
          </svg>
          <svg viewBox="0 0 10 10" width="10" height="10" className="ml-[14px] mr-[8px]" stroke="#f4f4f4" strokeWidth="1.500">
            <path d="M1.500 1.500l7 7M8.500 1.500l-7 7" />
          </svg>
        </div>
      </div>

      {/* toolbar */}
      <div className="h-[50px] bg-[#3f3f3f] flex items-start">
        {tools.map((t) => (
          <div key={t.label} className="flex items-start">
            <div className={`${t.w} flex flex-col items-center pt-[5px]`}>
              <Tool icon={t.icon} label={t.label} />
            </div>
            {t.sep && <div className={`w-px h-[40px] mt-[5px] bg-[#8c8c8c] ${t.sep}`} />}
          </div>
        ))}
      </div>

      {/* document area */}
      <div className="h-[626px] flex bg-[#2b2b2b]">
        <div className="ml-[197px] w-[972px] h-[626px] overflow-hidden">
          <Drawing />
        </div>
        <div className="ml-auto w-[10px] pt-[260px]">
          <div className="w-[9px] h-[20px] rounded-[4px] bg-[#d8d8d8]" />
        </div>
      </div>

      {/* status bar */}
      <div className="h-[27px] bg-[#383838] border-b border-[#111] flex items-center text-[12px]">
        <span className="ml-[2px] w-[164px] text-[12px] text-[#cfcfcf] whitespace-pre">
          页面大小<span className="font-['Liberation_Mono',monospace] tracking-[-1.2px]">: 25.70×18.19 </span>厘米
        </span>
        <div className="w-px h-[24px] bg-[#ddd]" />
        <ChevronLeft size={14} className="ml-[472px] text-[#ddd]" />
        <div className="ml-[4px] w-[39px] h-[17px] rounded-[5px] bg-white text-black text-[11px] flex items-center justify-center font-['Liberation_Mono',monospace]">
          74
        </div>
        <span className="ml-[6px] w-[36px] text-[11px] text-[#c8c8c8] font-['Liberation_Mono',monospace] whitespace-pre">/ 171</span>
        <ChevronRight size={14} className="text-[#ddd]" />
        <div className="ml-[470px] w-px h-[24px] bg-[#ccc]" />
        <div className="ml-[5px] w-[22px] flex gap-[1px] justify-center">
          <svg viewBox="0 0 18 20" width="18" height="20" fill="none" stroke="#777">
            <rect x="1" y="1" width="6" height="18" />
            <rect x="10" y="1" width="6" height="18" />
            <path d="M2.500 4h3M2.500 7h3M2.500 10h3M2.500 13h3M2.500 16h3M11.500 4h3M11.500 7h3M11.500 10h3M11.500 13h3M11.500 16h3" stroke="#aaa" />
          </svg>
        </div>
        <div className="w-[23px] h-[25px] bg-[#5a5a5a] flex flex-col items-center justify-center gap-[2px]">
          <div className="w-[14px] h-[9px] border-t-2 border-b border-[#b8b8b8]" />
          <div className="w-[14px] h-[7px] border-y border-[#b8b8b8]" />
        </div>
        <div className="w-px h-[24px] bg-[#ccc]" />
        <span className="ml-[11px] text-[14px] text-[#bbb]">−</span>
        <span className="ml-[14px] text-[11px] text-[#bdbdbd] font-['Liberation_Mono',monospace] tracking-[-0.5px]">100%</span>
        <span className="ml-[13px] text-[16px] text-[#ccc]">+</span>
      </div>

      {/* taskbar */}
      <div className="h-[40px] flex items-stretch bg-gradient-to-r from-[#000] via-[#04151b] to-[#041419] text-white">
        <div className="w-[48px] flex items-center justify-center">
          <svg viewBox="0 0 17 17" width="17" height="17" fill="#fff">
            <path d="M0 2.500l7-1v6.500H0zM8 1.300l9-1.300v8H8zM0 9h7v6.500l-7-1zM8 9h9v8l-9-1.300z" />
          </svg>
        </div>
        <div className="w-[344px] bg-[#f0f0f0] flex items-center">
          <div className="ml-[10px] w-[19px] h-[19px] rounded-full border-[3px] border-[#111]" />
          <span className="ml-[10px] text-[14px] text-[#333]">在这里输入你要搜索的内容</span>
          <Mic size={19} strokeWidth={1.200} className="ml-auto mr-[10px] text-[#333]" />
        </div>
        <div className="w-[48px] flex items-center justify-center">
          <svg viewBox="0 0 17 17" width="17" height="17" fill="none" stroke="#fff" strokeWidth="1.300">
            <path d="M1 1.500h10M1 15.500h10" />
            <rect x="1" y="4.500" width="10" height="8" />
            <path d="M14 3v2M14 7v3M14 12v2" strokeWidth="2" />
          </svg>
        </div>
        <div className="w-[52px] flex items-center justify-center">
          <svg viewBox="0 0 22 24" width="22" height="24" fill="#e8e8e8">
            <path d="M10.500 11.500C4 11.500 1 9 1 5.500 1 2 4 .5 7 .5s4 3 3.500 11z" />
            <path d="M11.500 11.500C18 11.500 21 9 21 5.500 21 2 18 .5 15 .5s-4 3-3.500 11z" />
            <path d="M10.500 12.500C4 12.500 1 15 1 18.500 1 22 4 23.500 7 23.500s4-3 3.500-11z" />
            <path d="M11.500 12.500C18 12.500 21 15 21 18.500 21 22 18 23.500 15 23.500s-4-3-3.500-11z" />
          </svg>
        </div>
        <div className="w-[52px] flex items-center justify-center">
          <FaInternetExplorer size={23} color="#f2f2f2" />
        </div>
        <div className="w-[52px] flex items-center justify-center">
          <svg viewBox="0 0 30 28" width="30" height="28" fill="none">
            <path d="M13 9a8 8 0 1 0 7 9c0-4-3-6-6-5s-3 5 0 6" stroke="#c4c4c4" strokeWidth="1.500" />
            <path d="M19 10c1-1 0-6 4-7s4 6 4 7l2 2H17z" fill="#e4a414" />
          </svg>
        </div>
        <div className="w-[48px] flex flex-col items-center">
          <div className="flex-1 flex items-center">
            <svg viewBox="0 0 24 25" width="24" height="25">
              <rect width="24" height="25" rx="2" fill="#1c4f86" />
              <circle cx="12" cy="9" r="4.500" fill="#d8c8b0" />
              <path d="M4 25q1-11 8-11t8 11z" fill="#2f8f80" />
              <circle cx="9" cy="16" r="3" fill="#e8e8e8" />
            </svg>
          </div>
          <div className="w-[34px] h-[2px] bg-[#7cc0ee]" />
        </div>
        <div className="w-[52px] bg-[#35474f] flex flex-col items-center">
          <div className="flex-1 flex items-center">
            <div className="w-[24px] h-[24px] rounded-[4px] bg-[#c05f16] border border-[#8a8a8a] flex items-center justify-center text-[9px] font-bold text-[#eac39c] font-['Liberation_Sans',sans-serif]">
              PDF
            </div>
          </div>
          <div className="w-full h-[2px] bg-[#7cc0ee]" />
        </div>
        <div className="flex-1" />
        <div className="w-[17px] bg-[#e4e4e4] flex flex-col items-center justify-between py-[3px] text-[#555]">
          <ChevronUp size={13} strokeWidth={3} />
          <ChevronDown size={13} strokeWidth={3} />
        </div>
        <div className="w-[56px] flex items-center justify-center">
          <svg viewBox="0 0 16 18" width="16" height="18" fill="none" stroke="#e8e8e8" strokeWidth="1.100">
            <circle cx="11" cy="4" r="2.500" />
            <circle cx="5" cy="8" r="2.500" />
            <path d="M1 17q0-6 4-6t4 6M10 8q5 0 5 6" />
          </svg>
        </div>
        <div className="w-[74px] flex flex-col items-center justify-center text-[12px] leading-[18px] text-[#e8e8e8]">
          <span>8%</span>
          <span>CPU使用</span>
        </div>
        <div className="w-[24px] flex items-center justify-center">
          <ChevronUp size={16} strokeWidth={1.500} />
        </div>
        <div className="w-[26px] flex items-center justify-center">
          <svg viewBox="0 0 17 14" width="17" height="14" fill="none" stroke="#eee" strokeWidth="1.100">
            <rect x="4" y="4" width="12" height="8" />
            <rect x="5" y="5" width="7" height="6" fill="#eee" stroke="none" />
            <path d="M1 1v3h4V1M3 4v4" />
          </svg>
        </div>
        <div className="w-[26px] flex items-center justify-center">
          <Wifi size={15} strokeWidth={1.500} className="text-[#ddd]" />
        </div>
        <div className="w-[16px] flex items-center justify-center">
          <svg viewBox="0 0 14 16" width="14" height="16" fill="none" stroke="#eee" strokeWidth="1.100">
            <path d="M1 5.500v5h3l4 4V1.500l-4 4zM10 5q1.500 3 0 6M12.500 3q2 5 0 10" />
          </svg>
        </div>
        <div className="w-[40px] flex items-center justify-center">
          <svg viewBox="0 0 24 17" width="24" height="17" fill="none" stroke="#eee">
            <rect x="0.500" y="0.500" width="23" height="16" />
            <path d="M3 4h18M3 7h18M3 10h18" strokeDasharray="1.500 1" />
            <path d="M6 13h12" />
          </svg>
        </div>
        <div className="w-[18px] flex items-center justify-center text-[13px]">中</div>
        <div className="w-[38px] flex items-center justify-center">
          <div className="w-[15px] h-[16px] rounded-[3px] -skew-x-6 bg-[#e8501c] text-white text-[13px] font-bold italic flex items-center justify-center font-['Liberation_Sans',sans-serif]">
            S
          </div>
        </div>
        <div className="w-[70px] flex flex-col items-center justify-center text-[13px] leading-[19px] text-[#eee]">
          <span>11:13</span>
          <span>2018/10/9</span>
        </div>
        <div className="w-[44px] flex items-center justify-center">
          <svg viewBox="0 0 17 18" width="17" height="18" fill="none" stroke="#f4f4f4" strokeWidth="1.200">
            <path d="M1 1h15v13h-4.500l-3 3-3-3H1z" />
          </svg>
        </div>
        <div className="w-[11px]" />
      </div>

      {/* battery widget peeking behind the IME bar */}
      <div className="absolute left-[717px] -top-[12px] w-[48px] h-[48px] rounded-full bg-[#2fbf62] border border-white text-center">
        <span className="absolute left-0 right-0 top-[11px] text-[10px] leading-[12px] font-bold text-white font-['Liberation_Sans',sans-serif]">79</span>
      </div>

      {/* sogou IME floating bar */}
      <div className="absolute left-[700px] top-[8px] w-[187px] h-[24px] bg-white border border-[#a9c8e6] flex items-center pl-[12px] text-[#1a7fd4]">
        <span className="w-[18px] text-[15px] font-bold leading-none">中</span>
        <span className="ml-[5px] w-[20px] text-[13px] font-bold leading-none">°,</span>
        <svg viewBox="0 0 18 18" width="17" height="17" fill="none" stroke="#1a7fd4" strokeWidth="1.600">
          <circle cx="9" cy="9" r="7.500" />
          <circle cx="6.500" cy="7" r="1" fill="#1a7fd4" stroke="none" />
          <circle cx="11.500" cy="7" r="1" fill="#1a7fd4" stroke="none" />
          <path d="M5 11q4 3.500 8 0" />
        </svg>
        <svg viewBox="0 0 14 18" width="14" height="18" className="ml-[6px]" fill="#1a7fd4">
          <rect x="4" y="0.500" width="6" height="11" rx="3" />
          <path d="M1 8q0 5.500 6 5.500T13 8h-1.500q0 4-4.500 4T2.500 8zM6 13h2v3h3v1.500H3V16h3z" />
        </svg>
        <svg viewBox="0 0 17 13" width="16" height="13" className="ml-[7px]" fill="#1a7fd4">
          <path d="M0 1q0-1 1-1h15q1 0 1 1v11q0 1-1 1H1q-1 0-1-1zM2 3v1.500h2V3zM5 3v1.500h2V3zM8 3v1.500h2V3zM11 3v1.500h2V3zM14 3v1.500h1.500V3zM2 6v1.500h2V6zM5 6v1.500h2V6zM8 6v1.500h2V6zM11 6v1.500h2V6zM14 6v1.500h1.500V6zM4 9v1.500h9V9z" fillRule="evenodd" />
        </svg>
        <div className="ml-[8px] relative w-[15px] h-[17px]">
          <svg viewBox="0 0 15 17" width="15" height="17" fill="#a9b8c4">
            <circle cx="8" cy="5" r="4" />
            <path d="M1 15q0-6 7-6t7 6z" />
          </svg>
          <span className="absolute left-[4px] top-[8px] text-[7px] leading-[8px] font-bold text-white bg-[#a9b8c4] px-[1px] font-['Liberation_Sans',sans-serif]">26</span>
        </div>
        <svg viewBox="0 0 16 15" width="15" height="15" className="ml-[7px]" fill="#1a7fd4">
          <path d="M5 0L0 3l2 4 2-1v9h8V6l2 1 2-4-5-3q-3 2-6 0z" />
        </svg>
        <svg viewBox="0 0 16 16" width="15" height="15" className="ml-[7px]" fill="#1a7fd4">
          <path d="M15.500 3.500l-3 3-2.500-.5-.5-2.500 3-3q-3.500-.8-5 1.200-1.200 1.800-.5 3.800L0.500 12q-1 1.500 0 2.700 1.300 1.300 2.800.3l6-6.500q2.200.6 4-.8 2-1.700 2.200-4.200z" />
        </svg>
      </div>
      <div className="absolute left-[684px] top-[6px] w-[24px] h-[25px] rounded-[4px] rotate-[-15deg] bg-[#ee4d1c] text-white text-[23px] leading-[25px] font-bold italic text-center font-['Liberation_Sans',sans-serif]">
        S
      </div>
    </div>
  );
}

const Tool = ({ icon, label }: { icon: ReactNode; label: string }) => (
  <>
    {icon}
    <span className="text-[12px] leading-[14px] mt-[2px] text-[#cfcfcf] whitespace-nowrap">{label}</span>
  </>
);
